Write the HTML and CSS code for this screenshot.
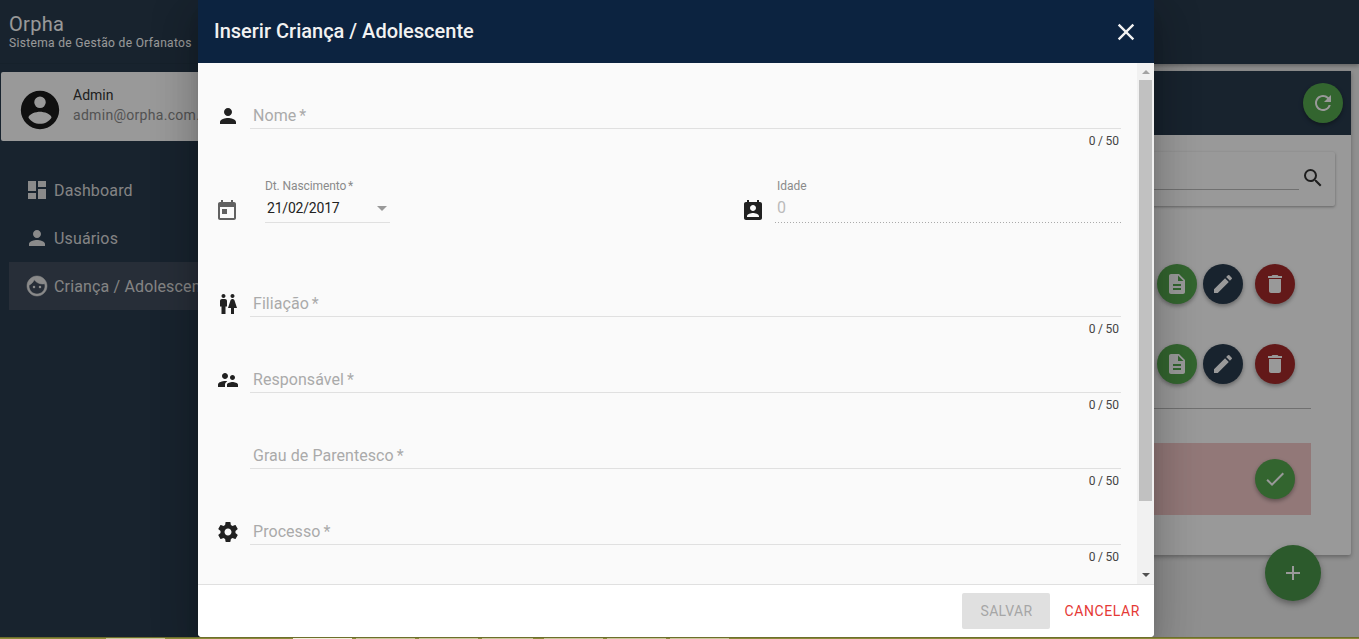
FILE: index.html
```html
<!DOCTYPE html>
<html lang="pt">
<head>
<meta charset="utf-8">
<title>Orpha</title>
<link rel="stylesheet" href="styles.css">
</head>
<body>
<div class="app">
  <aside class="sidebar">
    <div class="brand">
      <div class="brand-name">Orpha</div>
      <div class="brand-sub">Sistema de Gestão de Orfanatos</div>
    </div>
    <div class="user">
      <svg class="avatar" viewBox="0 0 24 24"><path d="M12,19.2C9.5,19.2 7.29,17.92 6,16C6.03,14 10,12.9 12,12.9C14,12.9 17.97,14 18,16C16.71,17.92 14.5,19.2 12,19.2M12,5A3,3 0 0,1 15,8A3,3 0 0,1 12,11A3,3 0 0,1 9,8A3,3 0 0,1 12,5M12,2A10,10 0 0,0 2,12A10,10 0 0,0 12,22A10,10 0 0,0 22,12A10,10 0 0,0 12,2Z"/></svg>
      <div class="user-text">
        <div class="user-name">Admin</div>
        <div class="user-mail">admin@orpha.com.br</div>
      </div>
    </div>
    <nav class="nav">
      <a class="nav-item"><svg class="nav-icon" viewBox="0 0 24 24"><path d="M3 13h8V3H3v10zm0 8h8v-6H3v6zm10 0h8V11h-8v10zm0-18v6h8V3h-8z"/></svg>Dashboard</a>
      <a class="nav-item"><svg class="nav-icon" viewBox="0 0 24 24"><path d="M12 12c2.21 0 4-1.79 4-4s-1.79-4-4-4-4 1.79-4 4 1.79 4 4 4zm0 2c-2.67 0-8 1.34-8 4v2h16v-2c0-2.66-5.33-4-8-4z"/></svg>Usuários</a>
      <a class="nav-item active"><svg class="nav-icon face-icon" viewBox="0 0 24 24"><path d="M12 2C6.48 2 2 6.48 2 12s4.48 10 10 10 10-4.48 10-10S17.52 2 12 2zm0 18c-4.41 0-8-3.59-8-8 0-.29.02-.58.05-.86 2.36-1.05 4.23-2.98 5.21-5.37C11.07 8.33 14.05 10 17.42 10c.78 0 1.53-.09 2.25-.26.21.71.33 1.47.33 2.26 0 4.41-3.59 8-8 8z"/><circle cx="9" cy="13" r="1.25"/><circle cx="15" cy="13" r="1.25"/></svg>Criança / Adolescente</a>
    </nav>
  </aside>
  <div class="main">
    <header class="topbar"></header>
    <section class="card">
      <div class="card-head">
        <button class="fab-sm green"><svg viewBox="0 0 24 24"><path d="M17.65 6.35A7.958 7.958 0 0 0 12 4c-4.42 0-7.99 3.58-7.99 8s3.57 8 7.99 8c3.73 0 6.84-2.55 7.73-6h-2.08A5.99 5.99 0 0 1 12 18c-3.31 0-6-2.69-6-6s2.69-6 6-6c1.66 0 3.14.69 4.22 1.78L13 11h7V4l-2.35 2.35z"/></svg></button>
      </div>
      <div class="card-body">
        <div class="search">
          <div class="search-input"></div>
          <svg class="search-icon" viewBox="0 0 24 24"><path d="M15.5 14h-.79l-.28-.27A6.471 6.471 0 0 0 16 9.5 6.5 6.5 0 1 0 9.5 16c1.61 0 3.09-.59 4.23-1.57l.27.28v.79l5 4.99L20.49 19l-4.99-5zm-6 0C7.01 14 5 11.99 5 9.5S7.01 5 9.5 5 14 7.01 14 9.5 11.99 14 9.5 14z"/></svg>
        </div>
        <div class="record">
          <button class="fab-sm green"><svg viewBox="0 0 24 24"><path d="M14 2H6c-1.1 0-1.99.9-1.99 2L4 20c0 1.1.89 2 1.99 2H18c1.1 0 2-.9 2-2V8l-6-6zm2 16H8v-2h8v2zm0-4H8v-2h8v2zm-3-5V3.5L18.5 9H13z"/></svg></button>
          <button class="fab-sm navy"><svg viewBox="0 0 24 24"><path d="M3 17.25V21h3.75L17.81 9.94l-3.75-3.75L3 17.25zM20.71 7.04a1 1 0 0 0 0-1.41l-2.34-2.34a1 1 0 0 0-1.41 0l-1.83 1.83 3.75 3.75 1.83-1.83z"/></svg></button>
          <button class="fab-sm red"><svg viewBox="0 0 24 24"><path d="M6 19c0 1.1.9 2 2 2h8c1.1 0 2-.9 2-2V7H6v12zM19 4h-3.5l-1-1h-5l-1 1H5v2h14V4z"/></svg></button>
        </div>
        <div class="record bordered">
          <button class="fab-sm green"><svg viewBox="0 0 24 24"><path d="M14 2H6c-1.1 0-1.99.9-1.99 2L4 20c0 1.1.89 2 1.99 2H18c1.1 0 2-.9 2-2V8l-6-6zm2 16H8v-2h8v2zm0-4H8v-2h8v2zm-3-5V3.5L18.5 9H13z"/></svg></button>
          <button class="fab-sm navy"><svg viewBox="0 0 24 24"><path d="M3 17.25V21h3.75L17.81 9.94l-3.75-3.75L3 17.25zM20.71 7.04a1 1 0 0 0 0-1.41l-2.34-2.34a1 1 0 0 0-1.41 0l-1.83 1.83 3.75 3.75 1.83-1.83z"/></svg></button>
          <button class="fab-sm red"><svg viewBox="0 0 24 24"><path d="M6 19c0 1.1.9 2 2 2h8c1.1 0 2-.9 2-2V7H6v12zM19 4h-3.5l-1-1h-5l-1 1H5v2h14V4z"/></svg></button>
        </div>
        <div class="record-alert">
          <button class="fab-sm green"><svg viewBox="0 0 24 24"><path d="M9 16.17 4.83 12l-1.42 1.41L9 19 21 7l-1.41-1.41z"/></svg></button>
        </div>
      </div>
    </section>
    <button class="fab"><svg viewBox="0 0 24 24"><path d="M19 13h-6v6h-2v-6H5v-2h6V5h2v6h6v2z"/></svg></button>
  </div>
  <div class="backdrop"></div>
  <div class="dialog">
    <div class="dialog-head">
      <h2 class="dialog-title">Inserir Criança / Adolescente</h2>
      <svg class="dialog-close" viewBox="0 0 24 24"><path d="M19 6.41 17.59 5 12 10.59 6.41 5 5 6.41 10.59 12 5 17.59 6.41 19 12 13.41 17.59 19 19 17.59 13.41 12z"/></svg>
    </div>
    <div class="dialog-body">
      <form class="form">
        <div class="row">
          <svg class="row-icon" viewBox="0 0 24 24"><path d="M12 12c2.21 0 4-1.79 4-4s-1.79-4-4-4-4 1.79-4 4 1.79 4 4 4zm0 2c-2.67 0-8 1.34-8 4v2h16v-2c0-2.66-5.33-4-8-4z"/></svg>
          <div class="field-wrap"><div class="field">Nome <span class="req">*</span></div><div class="counter">0 / 50</div></div>
        </div>
        <div class="date-row">
          <div class="date-col">
            <svg class="row-icon gray" viewBox="0 0 24 24"><path d="M19 3h-1V1h-2v2H8V1H6v2H5c-1.11 0-1.99.9-1.99 2L3 19c0 1.1.89 2 2 2h14c1.1 0 2-.9 2-2V5c0-1.1-.9-2-2-2zm0 16H5V8h14v11zM7 10h5v5H7z"/></svg>
            <div class="select">
              <div class="mini-label">Dt. Nascimento <span class="req">*</span></div>
              <div class="select-value">21/02/2017<span class="caret"></span></div>
            </div>
          </div>
          <div class="age-col">
            <svg class="row-icon" viewBox="0 0 24 24"><path d="M19 3h-1V1h-2v2H8V1H6v2H5c-1.11 0-2 .9-2 2v14c0 1.1.89 2 2 2h14c1.1 0 2-.9 2-2V5c0-1.1-.9-2-2-2zm-7 3c1.66 0 3 1.34 3 3s-1.34 3-3 3-3-1.34-3-3 1.34-3 3-3zm6 12H6v-1c0-2 4-3.1 6-3.1s6 1.1 6 3.1v1z"/></svg>
            <div class="age">
              <div class="mini-label">Idade</div>
              <div class="age-value">0</div>
            </div>
          </div>
        </div>
        <div class="row">
          <svg class="row-icon" viewBox="0 0 24 24"><path d="M5.5 22v-7.5H4V9c0-1.1.9-2 2-2h3c1.1 0 2 .9 2 2v5.5H9.5V22h-4zM18 22v-6h3l-2.54-7.63C18.18 7.55 17.42 7 16.56 7h-.12c-.86 0-1.63.55-1.9 1.37L12 16h3v6h3zM7.5 6c1.11 0 2-.89 2-2s-.89-2-2-2-2 .89-2 2 .89 2 2 2zm9 0c1.11 0 2-.89 2-2s-.89-2-2-2-2 .89-2 2 .89 2 2 2z"/></svg>
          <div class="field-wrap"><div class="field">Filiação <span class="req">*</span></div><div class="counter">0 / 50</div></div>
        </div>
        <div class="row">
          <svg class="row-icon" viewBox="0 0 24 24"><path d="M16.5 12c1.38 0 2.49-1.12 2.49-2.5S17.88 7 16.5 7C15.12 7 14 8.12 14 9.5s1.12 2.5 2.5 2.5zM9 11c1.66 0 2.99-1.34 2.99-3S10.66 5 9 5C7.34 5 6 6.34 6 8s1.34 3 3 3zm7.5 3c-1.83 0-5.5.92-5.5 2.75V19h11v-2.25c0-1.83-3.67-2.75-5.5-2.75zM9 13c-2.33 0-7 1.17-7 3.5V19h7v-2.25c0-.85.33-2.34 2.37-3.47C10.5 13.1 9.66 13 9 13z"/></svg>
          <div class="field-wrap"><div class="field">Responsável <span class="req">*</span></div><div class="counter">0 / 50</div></div>
        </div>
        <div class="row">
          <span class="row-icon"></span>
          <div class="field-wrap"><div class="field">Grau de Parentesco <span class="req">*</span></div><div class="counter">0 / 50</div></div>
        </div>
        <div class="row">
          <svg class="row-icon" viewBox="0 0 24 24"><path d="M19.43 12.98c.04-.32.07-.64.07-.98s-.03-.66-.07-.98l2.11-1.65c.19-.15.24-.42.12-.64l-2-3.46c-.12-.22-.39-.3-.61-.22l-2.49 1c-.52-.4-1.08-.73-1.69-.98l-.38-2.65C14.46 2.18 14.25 2 14 2h-4c-.25 0-.46.18-.49.42l-.38 2.65c-.61.25-1.17.59-1.69.98l-2.49-1c-.23-.09-.49 0-.61.22l-2 3.46c-.13.22-.07.49.12.64l2.11 1.65c-.04.32-.07.65-.07.98s.03.66.07.98l-2.11 1.65c-.19.15-.24.42-.12.64l2 3.46c.12.22.39.3.61.22l2.49-1c.52.4 1.08.73 1.69.98l.38 2.65c.03.24.24.42.49.42h4c.25 0 .46-.18.49-.42l.38-2.65c.61-.25 1.17-.59 1.69-.98l2.49 1c.23.09.49 0 .61-.22l2-3.46c.12-.22.07-.49-.12-.64l-2.11-1.65zM12 15.5c-1.93 0-3.5-1.57-3.5-3.5s1.57-3.5 3.5-3.5 3.5 1.57 3.5 3.5-1.57 3.5-3.5 3.5z"/></svg>
          <div class="field-wrap"><div class="field">Processo <span class="req">*</span></div><div class="counter">0 / 50</div></div>
        </div>
      </form>
      <div class="scrollbar">
        <span class="arrow-up"></span>
        <div class="thumb-track"><div class="thumb"></div></div>
        <span class="arrow-down"></span>
      </div>
    </div>
    <div class="dialog-foot">
      <button class="btn-save" type="button">SALVAR</button>
      <button class="btn-cancel" type="button">CANCELAR</button>
    </div>
  </div>
</div>
<div class="taskstrip">
  <span class="tab tab-a"></span>
  <span class="tab tab-b"></span>
  <span class="tab"></span>
  <span class="tab"></span>
  <span class="tab tab-c"></span>
  <span class="tab tab-d"></span>
  <span class="tab"></span>
  <span class="tab"></span>
</div>
</body>
</html>
```
FILE: styles.css
```css
* { box-sizing: border-box; }
html, body { margin: 0; padding: 0; height: 100%; overflow: hidden; }
body { font-family: Roboto, "Liberation Sans", sans-serif; background: #8a8a3a; }
.app { position: relative; height: 637px; display: flex; overflow: hidden; background: #eee; }

.sidebar { width: 260px; flex: none; background: #283b4e; display: flex; flex-direction: column; }
.brand { height: 64px; padding: 13px 0 0 9px; border-bottom: 1px solid #263849; color: #fff; }
.brand-name { font-size: 20px; line-height: 23px; letter-spacing: .3px; }
.brand-sub { font-size: 12px; line-height: 14px; letter-spacing: .33px; white-space: nowrap; }
.user { margin: 8px 0 0 1px; height: 69px; background: #fff; border-radius: 2px; display: flex; align-items: center; padding-left: 16px; }
.avatar { width: 46px; height: 46px; fill: #1c1c1c; flex: none; margin-top: 6px; }
.user-text { margin-left: 10px; font-size: 14px; line-height: 20px; margin-top: -3px; white-space: nowrap; }
.user-name { color: #333; }
.user-mail { color: #8a8a8a; letter-spacing: .3px; }
.nav { margin-top: 25px; padding-left: 9px; display: flex; flex-direction: column; }
.nav-item { height: 48px; display: flex; align-items: center; padding-left: 16px; color: #dcdcdc; font-size: 16px; letter-spacing: .15px; white-space: nowrap; }
.nav-item.active { background: #424e5e; }
.nav-icon { width: 24px; height: 24px; margin-right: 5px; fill: #e6e6e6; flex: none; }
.face-icon { stroke: #e6e6e6; stroke-width: .5; }
.face-icon circle { stroke: none; }

.main { flex: 1; position: relative; display: flex; flex-direction: column; min-width: 0; }
.topbar { height: 64px; background: #283b4e; flex: none; box-shadow: 0 2px 4px rgba(0,0,0,.3); }
.card { margin: 7px 8px 0 16px; height: 484px; background: #fff; border-radius: 0 0 2px 2px; box-shadow: 0 2px 4px rgba(0,0,0,.3); display: flex; flex-direction: column; }
.card-head { height: 64px; background: #283b4e; display: flex; align-items: center; justify-content: flex-end; padding-right: 8px; flex: none; }
.card-body { padding: 17px 40px 0 16px; display: flex; flex-direction: column; }
.search { height: 54px; margin-right: -24px; background: #fff; border-radius: 2px; box-shadow: 0 1px 3px rgba(0,0,0,.35); display: flex; align-items: flex-start; padding-right: 10px; }
.search-input { flex: 1; height: 38px; border-bottom: 1px solid #bbb; margin-left: 16px; }
.search-icon { width: 24px; height: 24px; fill: #333; margin: 14px 0 0 2px; flex: none; }
.record { height: 80px; display: flex; align-items: center; justify-content: flex-end; padding-right: 16px; }
.search + .record { margin-top: 38px; }
.bordered { height: 85px; padding-bottom: 5px; border-bottom: 1px solid #bbb; }
.record-alert { margin-top: 34px; height: 72px; background: #f3c9c9; display: flex; align-items: center; justify-content: flex-end; padding-right: 16px; }
button { border: 0; padding: 0; font: inherit; }
.fab-sm { width: 40px; height: 40px; border-radius: 50%; margin-left: 6px; display: flex; align-items: center; justify-content: center; box-shadow: 0 2px 4px rgba(0,0,0,.35); flex: none; }
.fab-sm + .red { margin-left: 12px; }
.fab-sm svg { width: 24px; height: 24px; fill: #fff; }
.green { background: #55a84f; }
.navy { background: #283b4e; }
.red { background: #a52a2a; }
.fab { position: absolute; right: 38px; top: 545px; width: 56px; height: 56px; border-radius: 50%; background: #4a964a; display: flex; align-items: center; justify-content: center; box-shadow: 0 3px 6px rgba(0,0,0,.35); }
.fab svg { width: 24px; height: 24px; fill: #fff; }

.backdrop { position: absolute; inset: 0; background: rgba(0,0,0,.4); }
.dialog { position: absolute; left: 198px; top: 0; width: 956px; height: 637px; background: #fff; border-radius: 0 0 4px 4px; display: flex; flex-direction: column; overflow: hidden; box-shadow: 0 11px 15px -7px rgba(0,0,0,.2), 0 24px 38px 3px rgba(0,0,0,.14), 0 9px 46px 8px rgba(0,0,0,.12); }
.dialog-head { height: 63px; flex: none; background: #0c2340; display: flex; align-items: center; justify-content: space-between; padding: 0 14px 2px 16px; }
.dialog-title { margin: 0; font-size: 20px; font-weight: 500; color: #f2f2f2; }
.dialog-close { width: 28px; height: 28px; fill: #f2f2f2; margin-top: 2px; }
.dialog-body { flex: 1; min-height: 0; display: flex; background: #fafafa; }
.form { flex: 1; padding-top: 33px; overflow: hidden; min-width: 0; }
.row { height: 76px; display: flex; padding: 0 16px 0 18px; }
.row-icon { width: 24px; height: 24px; flex: none; fill: #212121; }
.row > .row-icon { margin: 8px 10px 0 0; }
.field-wrap { flex: 1; min-width: 0; }
.field { height: 33px; border-bottom: 1px solid #e0e0e0; padding: 10px 0 0 3px; font-size: 16px; line-height: 20px; letter-spacing: .05px; color: #aaa; }
.req { margin-left: -1px; }
.counter { margin-top: 5px; font-size: 12px; line-height: 14px; text-align: right; color: #444; padding-right: 2px; word-spacing: -.5px; }
.date-row { height: 112px; display: flex; padding-left: 17px; padding-right: 16px; }
.date-col { width: 526px; display: flex; flex: none; }
.date-col .row-icon { margin-top: 27px; }
.gray { fill: #616161; }
.select { width: 125px; margin-left: 26px; padding-top: 7px; }
.mini-label { font-size: 12px; line-height: 14px; letter-spacing: -.1px; color: #8a8a8a; white-space: nowrap; }
.select-value { margin-top: 4px; height: 26px; border-bottom: 1px solid #e0e0e0; font-size: 14px; line-height: 22px; letter-spacing: -.2px; color: #222; padding-left: 2px; position: relative; }
.caret { position: absolute; right: 3px; top: 9px; border-left: 5px solid transparent; border-right: 5px solid transparent; border-top: 5px solid #999; }
.age-col { flex: 1; display: flex; min-width: 0; }
.age-col .row-icon { margin: 27px 10px 0 0; }
.age { flex: 1; padding-top: 7px; }
.age .mini-label { padding-left: 2px; letter-spacing: 0; }
.age-value { margin-top: 4px; height: 26px; padding-bottom: 1px; background: repeating-linear-gradient(90deg, #aaa 0 1px, transparent 1px 3px) left bottom / 100% 1px no-repeat; font-size: 16px; line-height: 22px; color: #bbb; padding-left: 2px; }
.scrollbar { width: 17px; flex: none; background: #f1f1f1; display: flex; flex-direction: column; align-items: center; }
.arrow-up, .arrow-down { flex: none; width: 0; height: 0; border-left: 4px solid transparent; border-right: 4px solid transparent; }
.arrow-up { margin-top: 7px; border-bottom: 4px solid #a3a3a3; }
.arrow-down { margin-bottom: 7px; border-top: 4px solid #505050; }
.thumb-track { flex: 1; width: 100%; padding: 6px 2px 0; min-height: 0; }
.thumb { height: 421px; background: #c1c1c1; }
.dialog-foot { height: 53px; flex: none; background: #fff; border-top: 1px solid #e0e0e0; display: flex; align-items: center; justify-content: flex-end; padding-right: 14px; }
.btn-save { width: 88px; height: 36px; border-radius: 2px; background: #e0e0e0; color: #a6a6a6; font-size: 14px; letter-spacing: .3px; }
.btn-cancel { margin-left: 14px; background: none; color: #e53935; font-size: 14px; letter-spacing: .6px; }

.taskstrip { height: 2px; background: #8a8a3a; border-top: 1px solid #6e6e2c; display: flex; gap: 4px; }
.tab { width: 59px; height: 1px; background: #c8c89a; flex: none; }
.tab-a { margin-left: 106px; }
.tab-b { margin-left: 124px; background: #f0f0dc; }
.tab-c { width: 51px; }
.tab-d { margin-left: 7px; }
```
